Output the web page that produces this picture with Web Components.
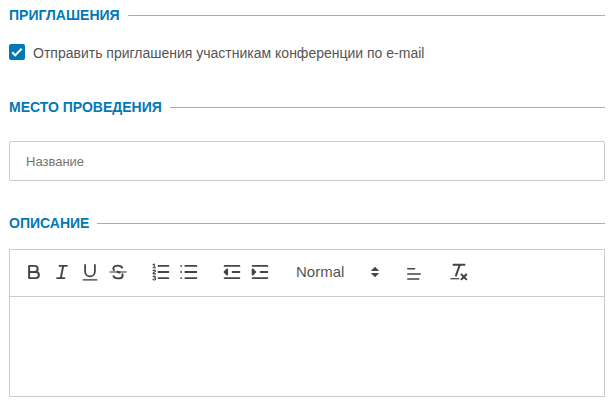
<!DOCTYPE html>
<html lang="ru">
<head>
<meta charset="utf-8">
<title>Конференция</title>
<style>
body{margin:0;background:#fff;font-family:"Liberation Sans",Arial,sans-serif;color:#555}
</style>
</head>
<body>
<conference-form></conference-form>
<script>
const define = (name, html) => customElements.define(name, class extends HTMLElement {
  constructor() {
    super();
    this.attachShadow({mode: 'open'}).innerHTML = html;
  }
});

define('section-title', `<style>
:host{display:flex;align-items:center;height:20px;gap:8px;font-size:14px;line-height:20px;font-weight:700;color:#0378b6;white-space:nowrap}
i{flex:1;height:1px;background:#7fbbda}
</style><slot></slot><i></i>`);

define('check-option', `<style>
:host{display:flex;align-items:center;gap:8px;height:20px;font-size:14px;line-height:20px;color:#555;white-space:nowrap}
svg{display:block;width:16px;height:16px;margin-bottom:2px}
</style><svg viewBox="0 0 16 16"><rect width="16" height="16" rx="2" fill="#0378b6"/><path d="M3.2 8.3l3 3 6.5-6.6" fill="none" stroke="#fff" stroke-width="2"/></svg><span><slot></slot></span>`);

define('text-field', `<style>
:host{display:flex;align-items:center;box-sizing:border-box;height:40px;border:1px solid #ccc;border-radius:2px;padding:0 16px;font-size:13px;color:#757575}
</style><slot></slot>`);

const icons = {
  bold: '<path d="M5 4h4.5a2.5 2.5 0 0 1 0 5H5zM5 9h5.5a2.5 2.5 0 0 1 0 5H5z"/>',
  italic: '<path d="M7 4h6M5 14h6M8 14l2-10"/>',
  underline: '<path d="M5 2.6V8.5a4 4 0 0 0 8 0V2.6" stroke-width="1.45"/><rect class="f" x="3" y="14.9" width="12" height="1.1"/>',
  strike: '<path d="M12.6 6C12 4.4 10.7 3.8 9 3.8c-2.2 0-3.8.9-3.8 2.4 0 .8.4 1.3 1 1.6M12.2 10.4c.4.4.6.8.6 1.4 0 1.6-1.6 2.4-3.8 2.4-2 0-3.5-.7-3.9-2.3M8 8.6l3 1"/><path class="t" d="M2 9h14"/>',
  ordered: '<path d="M7 4h8M7 9h8M7 14h8"/><path class="t" d="M2.5 5.5h2M3.5 5.5v-3l-1 .5M4.5 10.5h-2c0-1.3 1.9-1.5 1.9-2.4 0-.8-1.3-.9-1.9-.2M2.5 12.8a1 .8 0 0 1 1.9.4c0 .5-.4.6-1 .7.7 0 1.2.3 1.2.8 0 1-1.8 1.1-2.2.2"/>',
  bullet: '<path d="M6 4h9M6 9h9M6 14h9"/><path d="M2.6 4h.01M2.6 9h.01M2.6 14h.01" stroke-width="1.5"/>',
  outdent: '<path d="M3 14h12M3 4h12M9.5 9H15"/><path class="p" d="M5 7v4L3 9z"/>',
  indent: '<path d="M3 14h12M3 4h12M9.5 9H15"/><path class="p" d="M3 7v4l2-2z"/>',
  arrows: '<path class="f" d="M5.6 9.9h6.8L9 13.3zM5.6 8.1h6.8L9 4.7z"/>',
  align: '<path d="M2.8 9h12.4M2.8 14h11M2.8 3.8h6.8"/>',
  clean: '<path d="M4.5 3h9M6.5 12L9.7 3"/><path d="M11 11l4 4M15 11l-4 4"/><rect class="f" x="2" y="14" width="7.2" height="1"/>'
};
customElements.define('tool-icon', class extends HTMLElement {
  connectedCallback() {
    this.attachShadow({mode: 'open'}).innerHTML = `<style>
:host{display:flex;align-items:center;justify-content:center;width:28px;height:24px;flex:none}
svg{display:block;width:22px;height:22px;fill:none;stroke:#444;stroke-width:1.6;stroke-linejoin:round;stroke-linecap:round}
:host([name=align]) svg{width:18px;height:18px;stroke-width:1.6;margin-top:4px}
:host([name=underline]) svg,:host([name=strike]) svg{stroke-linecap:butt}
.f{fill:#444;stroke:none}.t{stroke-width:.9}.p{fill:#444}
</style><svg viewBox="0 0 18 18">${icons[this.getAttribute('name')]}</svg>`;
  }
});

define('tool-group', `<style>:host{display:flex;margin-right:15px}</style><slot></slot>`);

define('format-picker', `<style>
:host{display:flex;align-items:center;justify-content:space-between;box-sizing:border-box;width:100px;height:24px;padding-left:7px;margin-right:10px;font-size:15px;color:#555}
span{padding-bottom:2px}
</style><span><slot></slot></span><tool-icon name="arrows"></tool-icon>`);

define('rich-editor', `<style>
:host{display:block;box-sizing:border-box;height:148px;border:1px solid #ccc}
.bar{display:flex;align-items:center;box-sizing:border-box;height:47px;padding:0 10px 2px;border-bottom:1px solid #ccc}
</style><div class="bar">
<tool-group><tool-icon name="bold"></tool-icon><tool-icon name="italic"></tool-icon><tool-icon name="underline"></tool-icon><tool-icon name="strike"></tool-icon></tool-group>
<tool-group><tool-icon name="ordered"></tool-icon><tool-icon name="bullet"></tool-icon></tool-group>
<tool-group><tool-icon name="outdent"></tool-icon><tool-icon name="indent"></tool-icon></tool-group>
<format-picker>Normal</format-picker>
<tool-group style="margin-left:1px;margin-right:17px"><tool-icon name="align"></tool-icon></tool-group>
<tool-icon name="clean"></tool-icon>
</div><slot></slot>`);

define('conference-form', `<style>
:host{display:flex;flex-direction:column;padding:5px 10px 7px 9px}
check-option{margin:18px 0 34px}
text-field{margin:24px 0 32px}
rich-editor{margin-top:16px}
</style>
<section-title>ПРИГЛАШЕНИЯ</section-title>
<check-option>Отправить приглашения участникам конференции по e-mail</check-option>
<section-title>МЕСТО ПРОВЕДЕНИЯ</section-title>
<text-field>Название</text-field>
<section-title>ОПИСАНИЕ</section-title>
<rich-editor></rich-editor>`);
</script>
</body>
</html>
